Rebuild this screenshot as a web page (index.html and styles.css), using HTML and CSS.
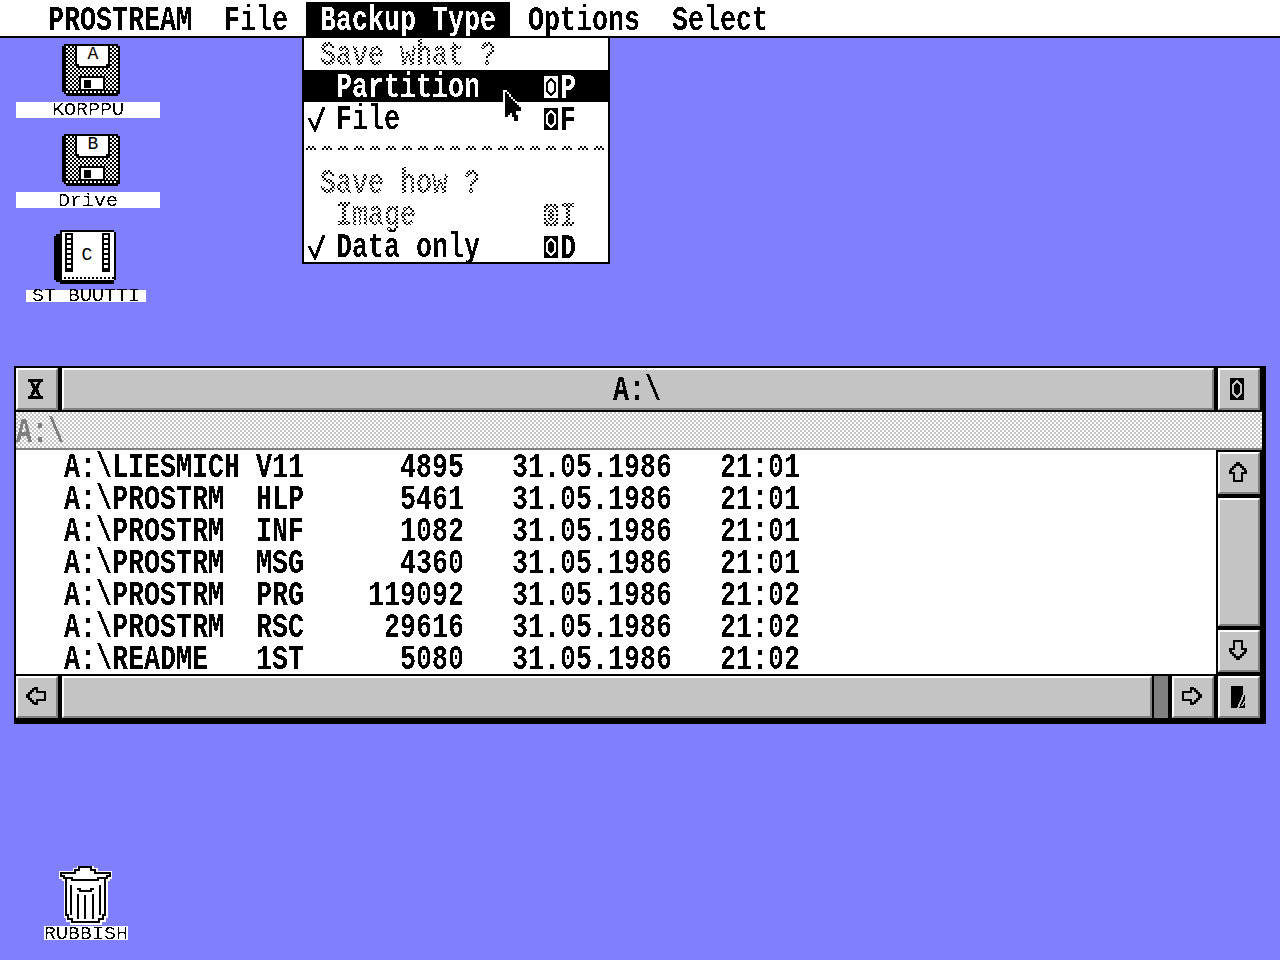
FILE: index.html
```html
<!DOCTYPE html>
<html lang="en">
<head>
<meta charset="utf-8">
<title>PROSTREAM</title>
<link rel="stylesheet" href="styles.css">
</head>
<body>
<svg class="defs" width="0" height="0" aria-hidden="true">
  <defs>
    <filter id="crisp" x="0" y="-50%" width="100%" height="200%" color-interpolation-filters="sRGB">
      <feComponentTransfer><feFuncA type="discrete" tableValues="0 1"/></feComponentTransfer>
    </filter>
    <pattern id="chk" width="4" height="4" patternUnits="userSpaceOnUse">
      <rect width="4" height="4" fill="#fff"/><rect width="2" height="2" fill="#000"/><rect x="2" y="2" width="2" height="2" fill="#000"/>
    </pattern>
    <pattern id="dots" width="4" height="2" patternUnits="userSpaceOnUse">
      <rect width="4" height="2" fill="#000"/><rect width="2" height="2" fill="#fff"/>
    </pattern>
    <symbol id="fuji" viewBox="0 0 14 22">
      <path fill="currentColor" fill-rule="evenodd" d="M0 0H14V22H0ZM7 1L12 7V15L7 21L2 15V7Z"/>
      <path fill="currentColor" d="M7 4L10 8V14L7 18L4 14V8Z"/>
    </symbol>
    <symbol id="arrow" viewBox="0 0 20 20">
      <path fill="none" stroke="#000" stroke-width="2" d="M9 1H11V3H13V5H15V7H17V9H18V11H14V19H6V11H2V9H3V7H5V5H7V3H9Z"/>
    </symbol>
    <symbol id="check" viewBox="0 0 18 26">
      <path fill="none" stroke="#000" stroke-width="3" d="M1 12L7 24L16 1"/>
    </symbol>
    <symbol id="floppy" viewBox="0 0 58 52">
      <path d="M2 0H56V2H58V50H56V52H4V50H2V48H0V2H2Z" fill="#000"/>
      <rect x="4" y="2" width="52" height="44" fill="url(#chk)"/>
      <rect x="4" y="47" width="52" height="2" fill="url(#dots)"/>
      <path d="M13 2H48V22H46V24H15V22H13Z" fill="#000"/>
      <path d="M15 2H46V20H44V22H17V20H15Z" fill="#fff"/>
      <rect x="17" y="32" width="26" height="15" fill="#000"/>
      <rect x="19" y="34" width="22" height="11" fill="#fff"/>
      <rect x="22" y="36" width="7" height="8" fill="#000"/>
    </symbol>
    <symbol id="chip" viewBox="0 0 62 54">
      <path d="M6 0H60V2H62V50H60V54H6V52H2V50H0V6H2V4H6Z" fill="#000"/>
      <rect x="8" y="2" width="52" height="44" fill="#fff"/>
      <rect x="8" y="46" width="52" height="4" fill="#fff"/>
      <rect x="8" y="47" width="52" height="2" fill="url(#dots)"/>
      <g class="ladder">
        <path d="M11 3H19V42H11ZM48 3H56V42H48Z" fill="#000"/>
        <path fill="#fff" d="M13 5H17V8H13ZM13 10H17V13H13ZM13 15H17V18H13ZM13 20H17V23H13ZM13 25H17V28H13ZM13 30H17V33H13ZM13 35H17V38H13ZM50 5H54V8H50ZM50 10H54V13H50ZM50 15H54V18H50ZM50 20H54V23H50ZM50 25H54V28H50ZM50 30H54V33H50ZM50 35H54V38H50Z"/>
      </g>
    </symbol>
    <symbol id="trash" viewBox="0 0 54 60">
      <path fill="#fff" stroke="#fff" stroke-width="5" d="M3 11V8H17V5H21V3H33V5H37V8H52V11H49V13H47V50H45V54H41V57H14V54H10V50H8V13H6V11Z"/>
      <path fill="none" stroke="#000" stroke-width="2" d="M3 11V8H17V5H21V2H33V5H37V8H52V11H49V13H47V50H45V54H41V57H14V54H10V50H8V13H6V11Z"/>
      <path fill="none" stroke="#000" stroke-width="2" d="M8 13H14V15H40V13H47M19 24H22V26H33V24H36M13 20V50M20 29V54M27 30V54M35 29V54M42 20V50"/>
    </symbol>
    <symbol id="cursor" viewBox="0 0 22 34">
      <path fill="#fff" d="M0 0H4V2H6V4H8V7H10V9H12V11H14V13H16V15H18V17H20V23H15V25H17V33H9V29H7V27H5V29H0Z"/>
      <path fill="#000" d="M2 2H4V4H6V7H8V9H10V11H12V13H14V15H16V17H18V21H13V25H15V31H11V27H9V23H7V25H5V27H2Z"/>
    </symbol>
  </defs>
</svg>

<header class="menubar">
  <div class="title"><span class="t"><span>PROSTREAM</span></span></div>
  <div class="title"><span class="t"><span>File</span></span></div>
  <div class="title active"><span class="t"><span>Backup Type</span></span></div>
  <div class="title"><span class="t"><span>Options</span></span></div>
  <div class="title"><span class="t"><span>Select</span></span></div>
</header>

<div class="dropdown">
  <div class="item dim head"><span class="t"><span>Save what ?</span></span></div>
  <div class="item selected">
    <span class="mark"></span><span class="t"><span>Partition</span></span>
    <span class="key"><svg class="fuji"><use href="#fuji"/></svg><span class="t"><span>P</span></span></span>
  </div>
  <div class="item">
    <svg class="mark"><use href="#check"/></svg><span class="t"><span>File</span></span>
    <span class="key"><svg class="fuji"><use href="#fuji"/></svg><span class="t"><span>F</span></span></span>
  </div>
  <div class="item"><div class="sep"></div></div>
  <div class="item dim head"><span class="t"><span>Save how ?</span></span></div>
  <div class="item dim">
    <span class="mark"></span><span class="t"><span>Image</span></span>
    <span class="key"><svg class="fuji"><use href="#fuji"/></svg><span class="t"><span>I</span></span></span>
  </div>
  <div class="item">
    <svg class="mark"><use href="#check"/></svg><span class="t"><span>Data only</span></span>
    <span class="key"><svg class="fuji"><use href="#fuji"/></svg><span class="t"><span>D</span></span></span>
  </div>
</div>

<svg class="pointer"><use href="#cursor"/></svg>

<div class="icon disk-a">
  <svg class="disk" viewBox="0 0 58 52"><use href="#floppy"/><text class="drive" x="31" y="15">A</text></svg>
  <div class="label"><span class="t"><span>KORPPU</span></span></div>
</div>
<div class="icon disk-b">
  <svg class="disk" viewBox="0 0 58 52"><use href="#floppy"/><text class="drive" x="31" y="15">B</text></svg>
  <div class="label"><span class="t"><span>Drive</span></span></div>
</div>
<div class="icon hd">
  <svg class="chip" viewBox="0 0 62 54"><use href="#chip"/><text class="drive" x="33" y="30">C</text></svg>
  <div class="label"><span class="t"><span>ST BUUTTI</span></span></div>
</div>
<div class="icon bin">
  <svg class="trash"><use href="#trash"/></svg>
  <div class="label"><span class="t"><span>RUBBISH</span></span></div>
</div>

<section class="window">
  <div class="titlerow">
    <div class="gadget">
      <svg class="closer" viewBox="0 0 15 20"><path fill="#000" d="M0 0H15V3H13L10 10L13 17H15V20H0V17H2L5 10L2 3H0ZM5 3L7.500 7L10 3ZM5 17H10L7.500 13Z" fill-rule="evenodd"/></svg>
    </div>
    <div class="gadget grow wintitle"><span class="t"><span>A:\</span></span></div>
    <div class="gadget"><svg class="fuji shifted"><use href="#fuji"/></svg></div>
  </div>
  <div class="info"><span class="t"><span>A:\</span></span></div>
  <div class="main">
    <div class="leftpane">
      <div class="listbox">
        <div class="list">
          <div class="row"><span>A:\LIESMICH</span><span>V11</span><span>4895</span><span>31.05.1986</span><span>21:01</span></div>
          <div class="row"><span>A:\PROSTRM</span><span>HLP</span><span>5461</span><span>31.05.1986</span><span>21:01</span></div>
          <div class="row"><span>A:\PROSTRM</span><span>INF</span><span>1082</span><span>31.05.1986</span><span>21:01</span></div>
          <div class="row"><span>A:\PROSTRM</span><span>MSG</span><span>4360</span><span>31.05.1986</span><span>21:01</span></div>
          <div class="row"><span>A:\PROSTRM</span><span>PRG</span><span>119092</span><span>31.05.1986</span><span>21:02</span></div>
          <div class="row"><span>A:\PROSTRM</span><span>RSC</span><span>29616</span><span>31.05.1986</span><span>21:02</span></div>
          <div class="row"><span>A:\README</span><span>1ST</span><span>5080</span><span>31.05.1986</span><span>21:02</span></div>
        </div>
      </div>
      <div class="hbar">
        <div class="gadget"><svg class="arrow left"><use href="#arrow"/></svg></div>
        <div class="gadget grow"></div>
        <div class="slider"></div>
        <div class="gadget"><svg class="arrow right"><use href="#arrow"/></svg></div>
      </div>
    </div>
    <div class="vbar">
      <div class="gadget"><svg class="arrow"><use href="#arrow"/></svg></div>
      <div class="gadget track"></div>
      <div class="gadget"><svg class="arrow down"><use href="#arrow"/></svg></div>
      <div class="gadget">
        <svg class="sizer" viewBox="0 0 14 22"><rect width="14" height="22" fill="#000"/><path fill="#c4c4c4" d="M14 0V8L8 22H6L12 8V0ZM14 14V16L12 20H10Z"/></svg>
      </div>
    </div>
  </div>
</section>
</body>
</html>
```

FILE: styles.css
```css
* { box-sizing: border-box; }

html, body { margin: 0; height: 100%; }

body {
  position: relative;
  width: 1280px;
  height: 960px;
  overflow: hidden;
  background: #8080ff;
  color: #000;
  font: bold 26.67px/25px "Liberation Mono", monospace;
}

.defs { position: absolute; }

svg { display: block; shape-rendering: crispEdges; }

/* crisp, non-antialiased tall system font: outer thresholds, inner stretches */
.t { display: inline-block; filter: url(#crisp); white-space: pre; }
.t > span { display: inline-block; transform: translateY(2px) scaleY(1.28); }

/* menu bar */
.menubar {
  display: flex;
  height: 38px;
  padding: 2px 0 0 32px;
  background: #fff;
  border-bottom: 2px solid #000;
}
.title { display: flex; align-items: center; height: 34px; padding: 0 14px; margin: 0 2px; }
.title.active { background: #000; color: #fff; }

/* drop-down */
.dropdown {
  position: absolute;
  left: 302px;
  top: 36px;
  width: 308px;
  height: 228px;
  background: #fff;
  border: 2px solid #000;
}
.item {
  position: relative;
  display: flex;
  align-items: center;
  height: 32px;
  padding: 1px 0 0 32px;
}
.item.head { padding-left: 16px; }
.item.selected { background: #000; color: #fff; }
.item > .mark { position: absolute; left: 4px; top: 4px; width: 18px; height: 26px; }
.key { position: absolute; left: 240px; top: 1px; display: flex; align-items: center; height: 32px; }
.key .fuji { margin-right: 2px; }
.fuji { width: 14px; height: 22px; }
.fuji.shifted { margin-left: -4px; }
.dim::after {
  content: "";
  position: absolute;
  inset: 0;
  background: conic-gradient(#fff 25%, transparent 0 50%, #fff 0 75%, transparent 0) 0 0 / 4px 4px;
}
.sep {
  position: absolute;
  left: 2px;
  right: 0;
  top: 12px;
  height: 4px;
  background:
    linear-gradient(90deg, transparent 10px, #fff 10px) 0 0 / 16px 100%,
    conic-gradient(#000 25%, #fff 0 50%, #000 0 75%, #fff 0) 0 0 / 4px 4px;
}

.pointer { position: absolute; left: 503px; top: 90px; width: 22px; height: 34px; }

/* desktop icons */
.icon { position: absolute; display: flex; flex-direction: column; }
.label {
  display: flex;
  align-items: center;
  justify-content: center;
  background: #fff;
  font-size: 20px;
  font-weight: normal;
  line-height: 12px;
}
.label .t > span { transform: translateY(1px) scaleY(.9); }
.hd .label .t > span { transform: scaleY(.9); }
.bin .label .t > span { transform: translateY(2px) scaleY(.9); }
.disk-a { left: 16px; top: 44px; width: 144px; }
.disk-b { left: 16px; top: 134px; width: 144px; }
.hd { left: 26px; top: 230px; width: 120px; }
.bin { left: 44px; top: 865px; width: 84px; }
.disk { width: 58px; height: 52px; margin: 0 0 6px 46px; }
.chip { width: 62px; height: 54px; margin: 0 0 6px 28px; }
.trash { width: 54px; height: 60px; margin: 0 0 1px 14px; }
.disk-a .label, .disk-b .label { height: 16px; }
.hd .label { height: 12px; }
.bin .label { height: 14px; }
.drive {
  font: normal 18px "Liberation Mono", monospace;
  text-anchor: middle;
  fill: #000;
}

/* window */
.window {
  position: absolute;
  left: 14px;
  top: 366px;
  width: 1252px;
  height: 358px;
  padding: 2px 6px 6px 2px;
  background: #000;
  display: flex;
  flex-direction: column;
}
.gadget {
  display: flex;
  align-items: center;
  justify-content: center;
  flex: 0 0 42px;
  height: 42px;
  background: #c4c4c4;
  border-style: solid;
  border-width: 2px;
  border-color: #fff #808080 #808080 #fff;
}
.grow { flex: 1 1 auto; }
.wintitle { padding-right: 2px; }
.titlerow { display: flex; gap: 4px; margin-bottom: 2px; }
.closer { width: 15px; height: 20px; margin: 0 3px 0 0; }
.info {
  height: 38px;
  margin-right: -2px;
  padding-top: 7px;
  border-bottom: 2px solid #808080;
  background: conic-gradient(#c4c4c4 25%, #fff 0 50%, #c4c4c4 0 75%, #fff 0) 0 0 / 4px 4px;
  color: #808080;
}
.main { display: flex; gap: 2px; }
.leftpane { display: flex; flex-direction: column; gap: 2px; width: 1200px; }
.listbox { height: 224px; padding: 6px 0 0 48px; background: #fff; }
.list { display: flex; flex-direction: column; gap: 7px; filter: url(#crisp); }
.row {
  display: grid;
  grid-template-columns: 192px 48px 160px 48px 160px 48px 80px;
  justify-content: start;
  height: 25px;
  white-space: pre;
  transform: scaleY(1.28);
}
.row > span:nth-child(1) { grid-column: 1; }
.row > span:nth-child(2) { grid-column: 2; }
.row > span:nth-child(3) { grid-column: 3; text-align: right; }
.row > span:nth-child(4) { grid-column: 5; }
.row > span:nth-child(5) { grid-column: 7; }
.hbar { display: flex; gap: 4px; width: 1198px; }
.slider { flex: 0 0 14px; margin-left: -2px; height: 42px; background: #808080; }
.vbar { display: flex; flex-direction: column; gap: 4px; width: 42px; padding-top: 2px; }
.vbar .gadget { flex: 0 0 42px; width: 42px; }
.vbar .track { flex: 0 0 128px; height: 128px; }
.arrow { width: 20px; height: 20px; margin: -2px 0 0 -2px; }
.arrow.left { transform: rotate(-90deg); }
.arrow.right { transform: rotate(90deg); }
.arrow.down { transform: rotate(180deg); }
.sizer { width: 14px; height: 22px; margin-left: -2px; }
```
